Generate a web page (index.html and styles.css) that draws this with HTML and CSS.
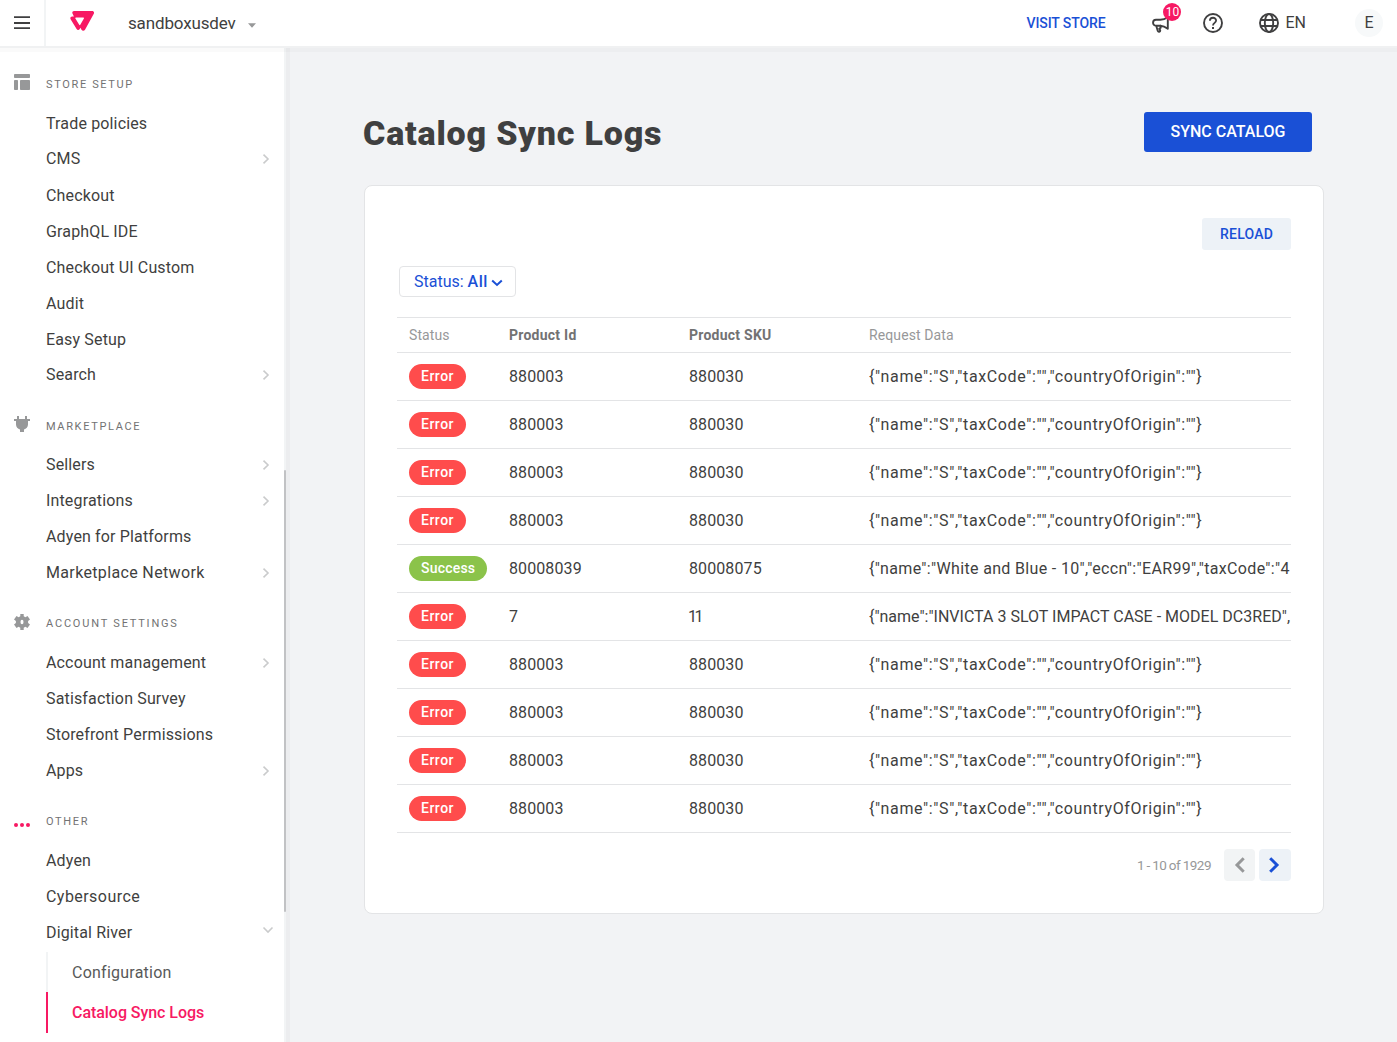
FILE: index.html
```html
<!DOCTYPE html>
<html lang="en">
<head>
<meta charset="utf-8">
<title>Catalog Sync Logs</title>
<link rel="stylesheet" href="styles.css">
</head>
<body>
<svg class="defs" width="0" height="0" aria-hidden="true">
  <symbol id="chevron" viewBox="0 0 8 12"><path d="M1.500 1.700 6 6 1.500 10.300" fill="none" stroke="currentColor" stroke-width="1.600"/></symbol>
</svg>
<header class="topbar">
  <button class="menu-btn" aria-label="Menu">
    <svg width="16" height="14" viewBox="0 0 16 14"><path d="M0 1.200h16M0 7h16M0 12.200h16" stroke="#3f3f40" stroke-width="1.800"/></svg>
  </button>
  <svg class="logo" width="24" height="21" viewBox="0 0 24 21">
    <path fill="#f71963" fill-rule="evenodd" d="M4 0h18.200c1.500 0 2.300 1.500 1.600 2.800L15 18.700c-.8 1.500-2.700 1.500-3.500 0l-1.100-2-.7 1.200c-.7 1.300-2.400 1.300-3.100 0L.6 8.300C-.1 7 .7 5.600 2.200 5.600h1.700L2.500 2.500C1.900 1.300 2.700 0 4 0ZM6 6.400h7.300c.6 0 .9.600.6 1.100l-3.600 6.300c-.3.500-.8.500-1.100 0L5.400 7.500C5.100 7 5.400 6.400 6 6.400Z"/>
  </svg>
  <button class="account">sandboxusdev
    <svg width="8" height="5" viewBox="0 0 8 5"><path d="M0 .3h8L4 4.700Z" fill="#979899"/></svg>
  </button>
  <nav class="tools">
    <a class="visit">VISIT STORE</a>
    <span class="news">
      <svg width="18" height="17" viewBox="0 0 18 17"><path d="M15.800 1.800v11c-2.600-2-4.700-2.900-7.500-3.100H4a2.900 2.900 0 0 1 0-5.900h4.300c2.800-.1 4.900-.8 7.500-2.600M4.200 9.800l1.600 5.200c.5 1.300 2.600.9 2.400-.5l-.9-2 1.300-.6V9.800" fill="none" stroke="#3f3f40" stroke-width="1.900" stroke-linejoin="round" stroke-linecap="round"/></svg>
      <span class="badge">10</span>
    </span>
    <svg class="help" width="20" height="20" viewBox="0 0 20 20"><circle cx="10" cy="10" r="9" fill="none" stroke="#3f3f40" stroke-width="1.900"/><path d="M6.900 7.800c0-4.100 6.200-4 6.200-.2 0 2.300-3.100 2.300-3.100 4.900" fill="none" stroke="#3f3f40" stroke-width="1.800"/><path d="M9 14h2v2H9z" fill="#3f3f40"/></svg>
    <span class="lang">
      <svg width="20" height="20" viewBox="0 0 20 20" fill="none" stroke="#3f3f40" stroke-width="1.900"><circle cx="10" cy="10" r="9"/><ellipse cx="10" cy="10" rx="4.200" ry="9"/><path d="M1.700 7h16.600M1.700 13h16.600"/></svg>
      EN
    </span>
    <span class="avatar">E</span>
  </nav>
</header>
<div class="shell">
  <aside class="sidebar">
    <section class="group store">
      <h2><svg width="16" height="16" viewBox="0 0 16 16" fill="#979899"><rect width="16" height="4" rx=".8"/><rect y="6" width="4" height="10" rx=".8"/><rect x="6" y="6" width="10" height="10" rx=".8"/></svg>STORE SETUP</h2>
      <a class="item">Trade policies</a>
      <a class="item raised">CMS<svg class="chev"><use href="#chevron"/></svg></a>
      <a class="item">Checkout</a>
      <a class="item">GraphQL IDE</a>
      <a class="item">Checkout UI Custom</a>
      <a class="item">Audit</a>
      <a class="item">Easy Setup</a>
      <a class="item raised">Search<svg class="chev"><use href="#chevron"/></svg></a>
    </section>
    <section class="group market">
      <h2><svg width="16" height="16" viewBox="0 0 16 16" fill="#979899"><path d="M3 0h2v3h6V0h2v3h3v2h-2v3.500c0 2.200-1.800 4.500-4 5V16H6v-2.500c-2.200-.5-4-2.800-4-5V5H0V3h3Z"/></svg>MARKETPLACE</h2>
      <a class="item">Sellers<svg class="chev"><use href="#chevron"/></svg></a>
      <a class="item">Integrations<svg class="chev"><use href="#chevron"/></svg></a>
      <a class="item">Adyen for Platforms</a>
      <a class="item wide">Marketplace Network<svg class="chev"><use href="#chevron"/></svg></a>
    </section>
    <section class="group settings">
      <h2><svg width="16" height="16" viewBox="0 0 16 16"><path d="M6.300 0h3.400v2.200l1.700 1L13.500 2 16 5.600 14.100 7v2l1.900 1.400-2.500 3.600-2.100-1.200-1.700 1V16H6.300v-2.200l-1.700-1L2.500 14 0 10.400 1.900 9V7L0 5.600 2.500 2l2.100 1.200 1.700-1Z" fill="#979899"/><ellipse cx="8" cy="8" rx="1.500" ry="2.300" fill="#fff"/></svg>ACCOUNT SETTINGS</h2>
      <a class="item">Account management<svg class="chev"><use href="#chevron"/></svg></a>
      <a class="item">Satisfaction Survey</a>
      <a class="item">Storefront Permissions</a>
      <a class="item">Apps<svg class="chev"><use href="#chevron"/></svg></a>
    </section>
    <section class="group other">
      <h2><svg width="16" height="4" viewBox="0 0 16 4" fill="#f71963"><circle cx="2" cy="2" r="2"/><circle cx="8" cy="2" r="2"/><circle cx="14" cy="2" r="2"/></svg>OTHER</h2>
      <a class="item">Adyen</a>
      <a class="item cyber">Cybersource</a>
      <a class="item">Digital River<svg class="chev-down" width="12" height="8" viewBox="0 0 12 8"><path d="M1.500 1.500 6 6l4.500-4.500" fill="none" stroke="#cacbcc" stroke-width="1.600"/></svg></a>
      <div class="sub">
        <a>Configuration</a>
        <a class="active">Catalog Sync Logs</a>
      </div>
    </section>
    <div class="scroll-thumb"></div>
  </aside>
  <main class="content">
    <div class="page-head">
      <h1>Catalog Sync Logs</h1>
      <button class="primary">SYNC CATALOG</button>
    </div>
    <div class="card">
      <button class="reload">RELOAD</button>
      <button class="filter">Status: <b>All</b>
        <svg width="12" height="8" viewBox="0 0 12 8"><path d="M1.200 1.500 6 6l4.800-4.500" fill="none" stroke="#1a50d6" stroke-width="2"/></svg>
      </button>
      <div class="table">
        <div class="row head"><span>Status</span><b>Product Id</b><b>Product SKU</b><span>Request Data</span></div>
        <div class="row"><span class="tag">Error</span><span>880003</span><span>880030</span><span class="json">{"name":"S","taxCode":"","countryOfOrigin":""}</span></div>
        <div class="row"><span class="tag">Error</span><span>880003</span><span>880030</span><span class="json">{"name":"S","taxCode":"","countryOfOrigin":""}</span></div>
        <div class="row"><span class="tag">Error</span><span>880003</span><span>880030</span><span class="json">{"name":"S","taxCode":"","countryOfOrigin":""}</span></div>
        <div class="row"><span class="tag">Error</span><span>880003</span><span>880030</span><span class="json">{"name":"S","taxCode":"","countryOfOrigin":""}</span></div>
        <div class="row"><span class="tag ok">Success</span><span>80008039</span><span>80008075</span><span class="json medium">{"name":"White and Blue - 10","eccn":"EAR99","taxCode":"4</span></div>
        <div class="row"><span class="tag">Error</span><span>7</span><span class="ones">11</span><span class="json tight">{"name":"INVICTA 3 SLOT IMPACT CASE - MODEL DC3RED",</span></div>
        <div class="row"><span class="tag">Error</span><span>880003</span><span>880030</span><span class="json">{"name":"S","taxCode":"","countryOfOrigin":""}</span></div>
        <div class="row"><span class="tag">Error</span><span>880003</span><span>880030</span><span class="json">{"name":"S","taxCode":"","countryOfOrigin":""}</span></div>
        <div class="row"><span class="tag">Error</span><span>880003</span><span>880030</span><span class="json">{"name":"S","taxCode":"","countryOfOrigin":""}</span></div>
        <div class="row"><span class="tag">Error</span><span>880003</span><span>880030</span><span class="json">{"name":"S","taxCode":"","countryOfOrigin":""}</span></div>
      </div>
      <div class="pager">
        <span class="range">1 - 10 of 1929</span>
        <button class="prev" aria-label="Previous"><svg width="12" height="16" viewBox="0 0 12 16"><path d="M9.700 1.200 3 8l6.700 6.800" fill="none" stroke="#979899" stroke-width="3"/></svg></button>
        <button class="next" aria-label="Next"><svg width="12" height="16" viewBox="0 0 12 16"><path d="M2.200 1.200 9 8l-6.800 6.800" fill="none" stroke="#1a50d6" stroke-width="3"/></svg></button>
      </div>
    </div>
  </main>
</div>
</body>
</html>
```
FILE: styles.css
```css
* { box-sizing: border-box; }
body {
  margin: 0;
  height: 1042px;
  overflow: hidden;
  background: #f2f3f5;
  color: #3f3f40;
  font: 16px/24px Roboto, "Liberation Sans", sans-serif;
}
.defs { position: absolute; }
button { margin: 0; padding: 0; border: 0; background: none; font: inherit; color: inherit; }
svg { display: block; flex: none; }

.topbar {
  position: relative;
  display: flex;
  align-items: center;
  height: 48px;
  padding-right: 14px;
  background: #fff;
  border-bottom: 2px solid #f0f1f2;
  box-shadow: 0 4px 0 rgba(0, 0, 0, .02);
  z-index: 1;
}
.menu-btn { width: 46px; height: 46px; padding: 0 0 1px 14px; border-right: 2px solid #f2f4f5; }
.logo { margin: -3px 0 0 24px; }
.account { display: flex; align-items: center; gap: 12px; margin-left: 34px; font-size: 17px; letter-spacing: -.15px; }
.account svg { margin-top: 4px; }
.tools { display: flex; align-items: center; margin-left: auto; height: 46px; }
.visit { color: #1a50d6; font-size: 14px; font-weight: 500; letter-spacing: -.1px; margin-right: 47px; }
.news { position: relative; margin-right: 33px; }
.news svg { margin-top: 2px; }
.badge {
  position: absolute;
  left: 11px;
  top: -11px;
  width: 18px;
  height: 18px;
  border-radius: 50%;
  background: #f71963;
  color: #fff;
  font-size: 12px;
  line-height: 18px;
  text-align: center;
}
.help { margin-right: 36px; }
.lang { display: flex; align-items: center; gap: 6px; margin-right: 49px; }
.avatar { width: 28px; height: 28px; border-radius: 50%; background: #f7f9fa; line-height: 28px; text-align: center; }

.shell { display: flex; height: 994px; }
.sidebar {
  position: relative;
  width: 286px;
  padding-top: 18px;
  background: #fff;
  border-right: 2px solid #f2f4f5;
  box-shadow: 4px 0 0 rgba(0, 0, 0, .025);
}
.group { margin-bottom: 14px; }
.group h2 {
  display: flex;
  align-items: center;
  gap: 16px;
  height: 40px;
  margin: 0;
  padding: 0 0 2px 14px;
  color: #727273;
  font-size: 11px;
  font-weight: 400;
  letter-spacing: 1.65px;
}
.group h2 svg { margin-top: -4px; }
.store { margin-bottom: 13px; }
.store h2 svg { margin-top: -6px; }
.market h2 { padding-bottom: 0; }
.market h2 svg { margin-top: -6px; }
.settings h2 { letter-spacing: 1.8px; }
.other h2 svg { margin-top: 6px; }
.item {
  display: flex;
  align-items: center;
  justify-content: space-between;
  height: 36px;
  padding: 0 14px 0 46px;
  letter-spacing: .15px;
}
.raised { padding-bottom: 2px; }
.wide { letter-spacing: .35px; }
.cyber { letter-spacing: .45px; }
.chev { width: 8px; height: 12px; color: #cacbcc; }
.chev-down { margin: -6px -4px 0 0; }
.sub { margin: 1px 0 0 46px; }
.sub a {
  display: block;
  height: 40px;
  padding-left: 24px;
  border-left: 2px solid #f2f4f5;
  color: #585959;
  line-height: 42px;
  letter-spacing: .24px;
}
.sub .active { height: 41px; border-color: #f71963; color: #f71963; font-weight: 500; letter-spacing: -.05px; }
.scroll-thumb { position: absolute; right: -2px; top: 422px; width: 2px; height: 442px; border-radius: 1px; background: #c1c2c4; }

.content { flex: 1; padding: 64px 73px 0 78px; }
.page-head { display: flex; justify-content: space-between; align-items: center; height: 40px; padding-right: 12px; }
h1 { margin: 0 0 0 -1px; padding-top: 1px; font-size: 34px; line-height: 40px; font-weight: 900; letter-spacing: .82px; }
.primary { width: 168px; height: 40px; border-radius: 3px; background: #1a50d6; color: #fff; font-weight: 500; }
.card {
  display: flex;
  flex-direction: column;
  height: 729px;
  margin-top: 33px;
  padding: 32px;
  border: 1px solid #e3e4e6;
  border-radius: 8px;
  background: #fff;
}
.reload { align-self: flex-end; width: 89px; height: 32px; border-radius: 3px; background: #edf2f7; color: #1a50d6; font-size: 14px; font-weight: 500; letter-spacing: .2px; }
.filter {
  display: flex;
  align-items: center;
  width: 117px;
  height: 31px;
  margin: 16px 0 20px 2px;
  padding-left: 14px;
  border: 1px solid #e3e4e6;
  border-radius: 4px;
  color: #1a50d6;
  white-space: pre;
}
.filter b { font-weight: 500; letter-spacing: .5px; }
.filter svg { margin: 3px 0 0 3px; }
.table { border-top: 1px solid #e3e4e6; }
.row {
  display: grid;
  grid-template-columns: 100px 180px 180px minmax(0, 1fr);
  align-items: center;
  height: 48px;
  padding-left: 12px;
  border-bottom: 1px solid #e3e4e6;
  letter-spacing: .1px;
}
.head { height: 35px; color: #979899; font-size: 14px; }
.head b { color: #727273; letter-spacing: .25px; }
.tag {
  justify-self: start;
  height: 25px;
  padding: 0 12px;
  border-radius: 13px;
  background: #ff4c4c;
  color: #fff;
  font-size: 14px;
  font-weight: 500;
  line-height: 25px;
  letter-spacing: .5px;
}
.ok { background: #8bc34a; letter-spacing: .2px; }
.ones { margin-left: -1px; letter-spacing: -2.500px; }
.json { overflow: hidden; white-space: nowrap; letter-spacing: .62px; }
.medium { letter-spacing: .34px; }
.tight { letter-spacing: .01px; }
.pager { display: flex; align-items: center; justify-content: flex-end; margin-top: 16px; }
.range { margin-right: 13px; color: #979899; font-size: 13.500px; letter-spacing: -.5px; word-spacing: -.400px; }
.prev, .next { display: grid; place-items: center; width: 31px; height: 32px; border-radius: 4px; }
.prev { margin-right: 4px; background: #f2f4f5; }
.next { width: 32px; padding-right: 2px; background: #edf2f7; }
```
